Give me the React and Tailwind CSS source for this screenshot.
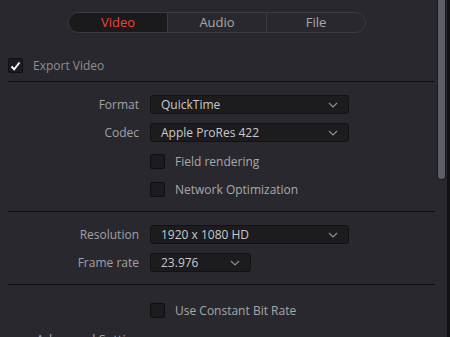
import React from "react";

const font = { fontFamily: '"Open Sans", "Noto Sans", sans-serif' };

function Chevron() {
  return (
    <svg width="10" height="6" viewBox="0 0 10 6" className="shrink-0">
      <path d="M1 1 L5 5 L9 1" fill="none" stroke="#8e8e92" strokeWidth="1.2" />
    </svg>
  );
}

function Select({ value, wide = true }) {
  return (
    <div
      className={`flex items-center justify-between h-[19px] rounded-[3px] border border-[#121214] bg-[#1c1c1f] pl-[10px] pr-[10px] ${
        wide ? "w-[199px]" : "w-[101px]"
      }`}
    >
      <span className="text-[12px] leading-none text-[#cacaca]">{value}</span>
      <Chevron />
    </div>
  );
}

function Box({ checked }) {
  return (
    <div className="w-[15px] h-[15px] rounded-[2px] border border-[#0f0f11] bg-[#1c1c1f] flex items-center justify-center shrink-0">
      {checked && (
        <svg width="11" height="10" viewBox="0 0 11 10">
          <path d="M1.5 5.5 L4.2 8.3 L9.5 1.5" fill="none" stroke="#ffffff" strokeWidth="1.9" />
        </svg>
      )}
    </div>
  );
}

function Row({ label, children, className = "" }) {
  return (
    <div className={`flex items-center ${className}`}>
      <div className="w-[139px] text-right text-[12px] text-[#a2a2a6] leading-none">{label}</div>
      <div className="ml-[11px]">{children}</div>
    </div>
  );
}

function CheckRow({ label, className = "" }) {
  return (
    <div className={`flex items-center pl-[150px] ${className}`}>
      <Box />
      <span className="ml-[10px] text-[12px] leading-none text-[#a8a8ac]">{label}</span>
    </div>
  );
}

export default function App() {
  return (
    <div className="relative w-[450px] h-[337px] overflow-hidden bg-[#28282e]" style={font}>
      <div className="w-[437px] flex flex-col">
        {/* tabs */}
        <div className="mt-[12px] ml-[68px] flex w-[298px] h-[21px] rounded-full border border-[#3a3a40] overflow-hidden">
          <div className="flex-1 flex items-center justify-center bg-[#1a1a1d] text-[13px] text-[#e8463a]">Video</div>
          <div className="flex-1 flex items-center justify-center border-l border-[#3a3a40] text-[13px] text-[#a8a8ac]">Audio</div>
          <div className="flex-1 flex items-center justify-center border-l border-[#3a3a40] text-[13px] text-[#a8a8ac]">File</div>
        </div>

        <div className="mt-[25px] ml-[8px] flex items-center">
          <Box checked />
          <span className="ml-[10px] text-[12px] leading-none text-[#8e8e92]">Export Video</span>
        </div>

        <div className="mt-[8px] ml-[8px] w-[427px] h-px bg-[#0e0e10]" />

        <Row label="Format" className="mt-[13px]">
          <Select value="QuickTime" />
        </Row>
        <Row label="Codec" className="mt-[9px]">
          <Select value="Apple ProRes 422" />
        </Row>
        <CheckRow label="Field rendering" className="mt-[12px]" />
        <CheckRow label="Network Optimization" className="mt-[13px]" />

        <div className="mt-[14px] ml-[8px] w-[427px] h-px bg-[#0e0e10]" />

        <Row label="Resolution" className="mt-[13px]">
          <Select value="1920 x 1080 HD" />
        </Row>
        <Row label="Frame rate" className="mt-[9px]">
          <Select value="23.976" wide={false} />
        </Row>

        <div className="mt-[12px] ml-[8px] w-[427px] h-px bg-[#0e0e10]" />

        <CheckRow label="Use Constant Bit Rate" className="mt-[18px]" />

        <div className="mt-[15px] ml-[36px] text-[13px] text-[#a4a4a8] leading-none">Advanced Settings</div>
      </div>

      {/* scrollbar */}
      <div className="absolute top-0 right-[4px] w-[9px] h-[180px] rounded-b-[4px] bg-[#5c5f66] border border-[#1a1a1c] border-t-0" />
      <div className="absolute top-0 right-0 w-[3px] h-full bg-[#121214]" />
    </div>
  );
}
